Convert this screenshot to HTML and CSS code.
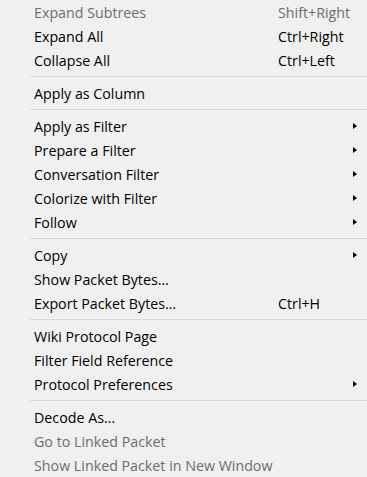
FILE: index.html
```html
<!DOCTYPE html>
<html>
	<head>
		<title>Packet Details Menu</title>
		<link rel="stylesheet" href="styles.css">
	</head>
	<body>
		<div class="contextMenu">
			<div class="menuItem disabled"><span class="label">Expand Subtrees</span><span class="shortcut">Shift+Right</span></div>
			<div class="menuItem"><span class="label">Expand All</span><span class="shortcut">Ctrl+Right</span></div>
			<div class="menuItem"><span class="label">Collapse All</span><span class="shortcut">Ctrl+Left</span></div>
			<div class="separator"></div>
			<div class="menuItem"><span class="label">Apply as Column</span></div>
			<div class="separator"></div>
			<div class="menuItem"><span class="label">Apply as Filter</span><span class="shortcut"></span><span class="arrow"></span></div>
			<div class="menuItem"><span class="label">Prepare a Filter</span><span class="shortcut"></span><span class="arrow"></span></div>
			<div class="menuItem"><span class="label">Conversation Filter</span><span class="shortcut"></span><span class="arrow"></span></div>
			<div class="menuItem"><span class="label">Colorize with Filter</span><span class="shortcut"></span><span class="arrow"></span></div>
			<div class="menuItem"><span class="label">Follow</span><span class="shortcut"></span><span class="arrow"></span></div>
			<div class="separator"></div>
			<div class="menuItem"><span class="label">Copy</span><span class="shortcut"></span><span class="arrow"></span></div>
			<div class="menuItem"><span class="label">Show Packet Bytes…</span></div>
			<div class="menuItem"><span class="label">Export Packet Bytes…</span><span class="shortcut">Ctrl+H</span></div>
			<div class="separator"></div>
			<div class="menuItem"><span class="label">Wiki Protocol Page</span></div>
			<div class="menuItem"><span class="label">Filter Field Reference</span></div>
			<div class="menuItem"><span class="label">Protocol Preferences</span><span class="shortcut"></span><span class="arrow"></span></div>
			<div class="separator"></div>
			<div class="menuItem"><span class="label">Decode As…</span></div>
			<div class="menuItem disabled"><span class="label">Go to Linked Packet</span></div>
			<div class="menuItem disabled"><span class="label">Show Linked Packet in New Window</span></div>
		</div>
	</body>
</html>
```

FILE: styles.css
```css
html, body {
	margin: 0;
	background-color: #f0f0f0;
}

.contextMenu {
	width: 367px;
	height: 477px;
	overflow: hidden;
	background-color: #f0f0f0;
	font-family: "Open Sans", "Noto Sans", sans-serif;
	font-size: 14.25px;
	color: #000000;
}

.menuItem {
	display: grid;
	grid-template-columns: 244px 1fr 4px;
	align-items: center;
	height: 22px;
	line-height: 22px;
	padding-top: 2px;
	padding-left: 34px;
	padding-right: 10px;
	white-space: nowrap;
}

.menuItem.disabled {
	color: #6d6d6d;
}

.separator {
	height: 1px;
	margin: 4px 0px 4px 30px;
	background-color: #d7d7d7;
}

.arrow {
	width: 0;
	height: 0;
	margin-top: -2px;
	border-top: 3.5px solid transparent;
	border-bottom: 3.5px solid transparent;
	border-left: 4px solid #000000;
}
```
